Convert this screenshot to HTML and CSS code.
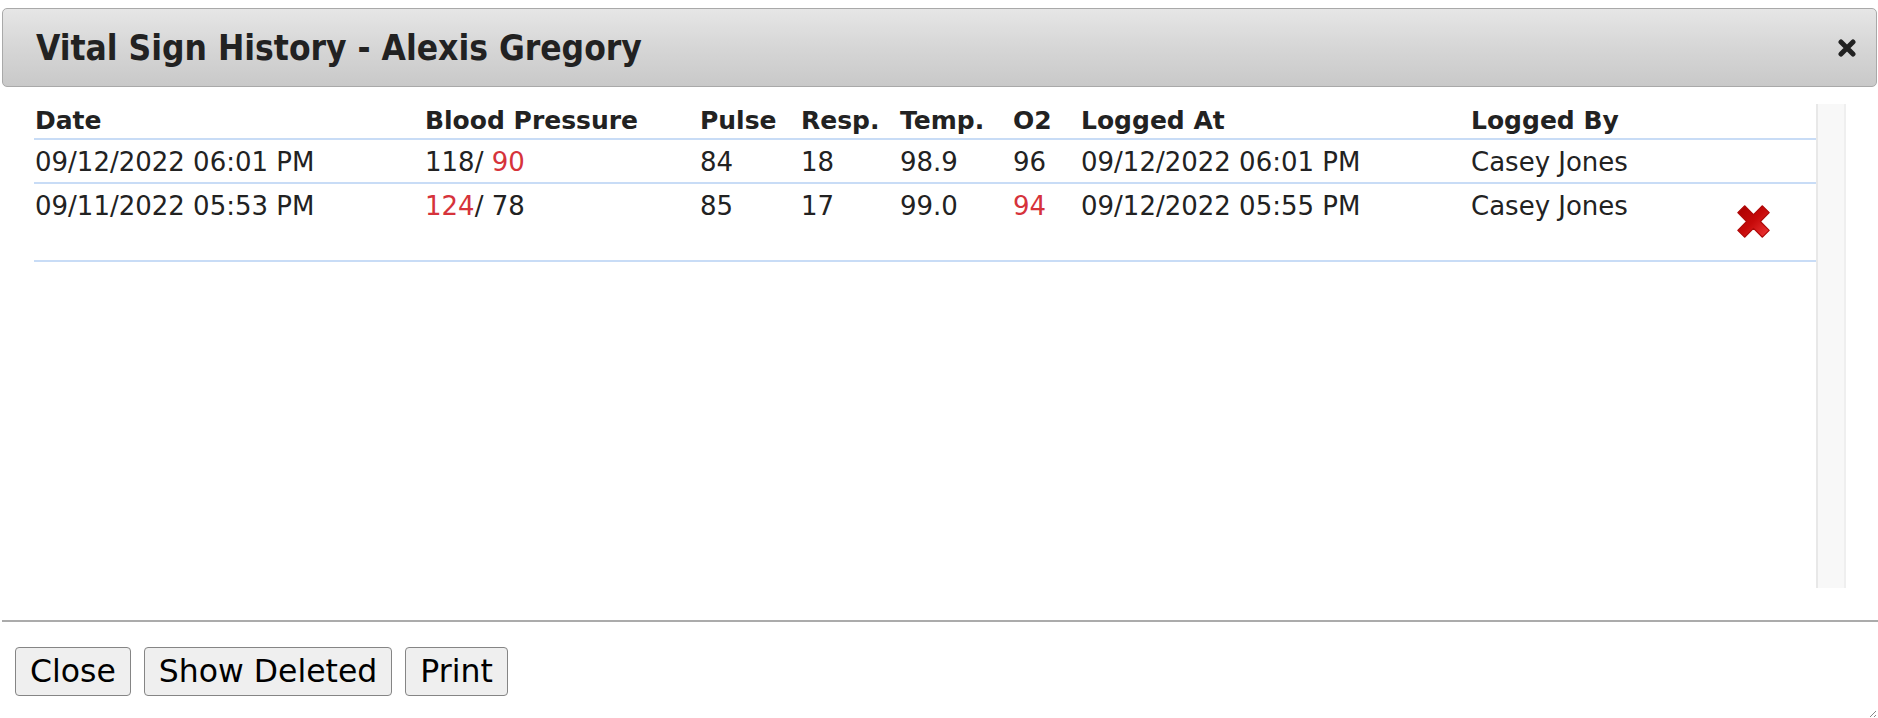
FILE: index.html
```html
<!DOCTYPE html>
<html>
<head>
<meta charset="utf-8">
<title>Vital Sign History</title>
<link rel="stylesheet" href="styles.css">
</head>
<body>
<div class="dialog">
  <div class="titlebar">
    <span class="title">Vital Sign History - Alexis Gregory</span>
    <svg class="close-icon" width="18" height="18" viewBox="0 0 18 18">
      <path d="M3 3 L15 15 M15 3 L3 15" stroke="#222" stroke-width="5" stroke-linecap="round"/>
    </svg>
  </div>
  <div class="content">
    <div class="table">
      <div class="row head">
        <div class="cell">Date</div>
        <div class="cell">Blood Pressure</div>
        <div class="cell">Pulse</div>
        <div class="cell">Resp.</div>
        <div class="cell">Temp.</div>
        <div class="cell">O2</div>
        <div class="cell">Logged At</div>
        <div class="cell">Logged By</div>
        <div class="cell"></div>
        <div class="cell"></div>
      </div>
      <div class="row">
        <div class="cell">09/12/2022 06:01 PM</div>
        <div class="cell">118/ <span class="alert">90</span></div>
        <div class="cell">84</div>
        <div class="cell">18</div>
        <div class="cell">98.9</div>
        <div class="cell">96</div>
        <div class="cell">09/12/2022 06:01 PM</div>
        <div class="cell">Casey Jones</div>
        <div class="cell"></div>
        <div class="cell"></div>
      </div>
      <div class="row">
        <div class="cell">09/11/2022 05:53 PM</div>
        <div class="cell"><span class="alert">124</span>/ 78</div>
        <div class="cell">85</div>
        <div class="cell">17</div>
        <div class="cell">99.0</div>
        <div class="cell"><span class="alert">94</span></div>
        <div class="cell">09/12/2022 05:55 PM</div>
        <div class="cell">Casey Jones</div>
        <div class="cell icon-cell">
          <svg class="delete-icon" width="35" height="35" viewBox="0 0 35 35">
            <defs>
              <linearGradient id="redg" x1="0" y1="0" x2="1" y2="1">
                <stop offset="0" stop-color="#a80000"/>
                <stop offset="0.5" stop-color="#c70a0a"/>
                <stop offset="1" stop-color="#f03a3a"/>
              </linearGradient>
            </defs>
            <path d="M1.8 8.6 L8.6 1.8 L17.5 10.6 L26.4 1.8 L33.2 8.6 L24.4 17.5 L33.2 26.4 L26.4 33.2 L17.5 24.4 L8.6 33.2 L1.8 26.4 L10.6 17.5 Z" fill="url(#redg)" stroke="#b00a0a" stroke-width="1.2" stroke-linejoin="round"/>
          </svg>
        </div>
        <div class="cell"></div>
      </div>
    </div>
    <div class="scroll-track"></div>
  </div>
  <div class="footer">
    <button class="btn">Close</button>
    <button class="btn">Show Deleted</button>
    <button class="btn">Print</button>
  </div>
  <svg class="resize-handle" width="10" height="10" viewBox="0 0 10 10">
    <path d="M9 3 L3 9 M9 7 L7 9" stroke="#888" stroke-width="1"/>
  </svg>
</div>
</body>
</html>
```

FILE: styles.css
```css
html, body {
  margin: 0;
  padding: 0;
  background: #ffffff;
}

body {
  font-family: "DejaVu Sans", Verdana, sans-serif;
  color: #222222;
  overflow: hidden;
}

.dialog {
  position: relative;
  margin: 0 1px 0 2px;
  padding-top: 8px;
  height: 710px;
}

.titlebar {
  box-sizing: border-box;
  height: 79px;
  border: 1px solid #a9a9a9;
  border-radius: 5px;
  background: linear-gradient(to bottom, #e6e6e6 0%, #d6d6d6 50%, #c9c9c9 100%);
  display: flex;
  align-items: center;
  justify-content: space-between;
  padding: 0 20px 0 33px;
}

.title {
  font-family: "DejaVu Sans Condensed", "DejaVu Sans", sans-serif;
  font-stretch: condensed;
  font-weight: bold;
  font-size: 35px;
  color: #222222;
}

.close-icon {
  display: block;
  margin-top: 1px;
}

.content {
  display: flex;
  margin-top: 17px;
  height: 484px;
  padding: 0 31px 0 32px;
}

.table {
  flex: 1;
}

.row {
  display: grid;
  grid-template-columns: 390px 275px 101px 99px 113px 68px 390px 246px 74px 1fr;
  border-bottom: 2px solid #c8dcf6;
  font-size: 26px;
  line-height: 30px;
}

.cell {
  padding: 7px 0 5px 1px;
  white-space: nowrap;
}

.head .cell {
  font-weight: bold;
  font-size: 25px;
  padding: 2px 0 2px 1px;
}

.alert {
  color: #d6333b;
}

.icon-cell {
  padding: 20px 0 21px 0;
  display: flex;
  justify-content: center;
}

.delete-icon {
  display: block;
}

.scroll-track {
  width: 26px;
  border-left: 2px solid #e8e8e8;
  border-right: 2px solid #efefef;
  background: #f8f8f8;
}

.footer {
  margin-top: 32px;
  margin-right: -1px;
  border-top: 2px solid #ababab;
  padding: 25px 0 0 13px;
  display: flex;
  gap: 13px;
}

.btn {
  box-sizing: border-box;
  height: 49px;
  padding: 0 14px;
  font-family: "DejaVu Sans", Verdana, sans-serif;
  font-size: 31.5px;
  color: #000000;
  background: #efefef;
  border: 1px solid #858585;
  border-radius: 4px;
  line-height: 1;
}

.resize-handle {
  position: absolute;
  right: 0;
  bottom: 0;
}
```
